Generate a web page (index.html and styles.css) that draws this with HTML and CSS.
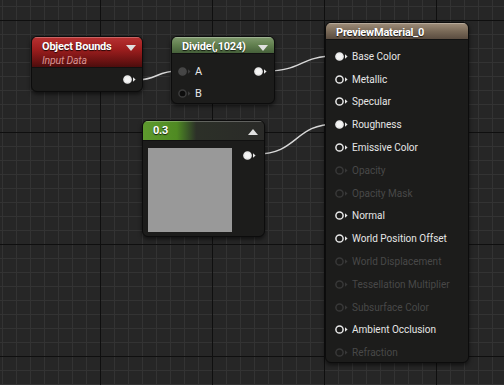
FILE: index.html
```html
<!DOCTYPE html>
<html lang="en">
<head>
    <meta charset="UTF-8">
    <title>Material Graph</title>
    <link rel="stylesheet" href="styles.css">
</head>
<body>
    <div class="graph">
        <!-- wires sit behind the nodes -->
        <svg class="wires" width="504" height="385" viewBox="0 0 504 385">
            <path d="M136 80 C158 80 156 71 178 71"/>
            <path d="M267 71 C302 71 300 56 336 56"/>
            <path d="M257 154 C298 154 294 124 336 124"/>
        </svg>

        <div class="node node-bounds">
            <div class="node-head head-red">
                <div class="head-text">
                    <div class="title">Object Bounds</div>
                    <div class="subtitle">Input Data</div>
                </div>
                <span class="caret down"></span>
            </div>
            <div class="node-body end">
                <div class="pin-row out"><svg class="pin on" viewBox="0 0 13 9"><circle cx="4.5" cy="4.5" r="3.6"/><path d="M10 2.3 L12.6 4.5 L10 6.7 Z"/></svg></div>
            </div>
        </div>

        <div class="node node-divide">
            <div class="node-head head-sage">
                <div class="title">Divide(,1024)</div>
                <span class="caret down"></span>
            </div>
            <div class="node-body split">
                <div class="pin-col">
                    <div class="pin-row"><svg class="pin dim-fill" viewBox="0 0 13 9"><circle cx="4.5" cy="4.5" r="3.6"/><path d="M10 2.3 L12.6 4.5 L10 6.7 Z"/></svg><span>A</span></div>
                    <div class="pin-row"><svg class="pin dim" viewBox="0 0 13 9"><circle cx="4.5" cy="4.5" r="3.6"/><path d="M10 2.3 L12.6 4.5 L10 6.7 Z"/></svg><span>B</span></div>
                </div>
                <div class="pin-col">
                    <div class="pin-row"><svg class="pin on" viewBox="0 0 13 9"><circle cx="4.5" cy="4.5" r="3.6"/><path d="M10 2.3 L12.6 4.5 L10 6.7 Z"/></svg></div>
                </div>
            </div>
        </div>

        <div class="node node-const">
            <div class="node-head head-green">
                <div class="title">0.3</div>
                <span class="caret up"></span>
            </div>
            <div class="node-body preview">
                <div class="swatch"></div>
                <div class="pin-row"><svg class="pin on" viewBox="0 0 13 9"><circle cx="4.5" cy="4.5" r="3.6"/><path d="M10 2.3 L12.6 4.5 L10 6.7 Z"/></svg></div>
            </div>
        </div>

        <div class="node node-material">
            <div class="node-head head-brown">
                <div class="title">PreviewMaterial_0</div>
            </div>
            <div class="node-body inputs" id="inputs"></div>
        </div>
    </div>

    <script>
        // material inputs: [label, connected, enabled]
        const inputs = [
            ['Base Color', true, true],
            ['Metallic', false, true],
            ['Specular', false, true],
            ['Roughness', true, true],
            ['Emissive Color', false, true],
            ['Opacity', false, false],
            ['Opacity Mask', false, false],
            ['Normal', false, true],
            ['World Position Offset', false, true],
            ['World Displacement', false, false],
            ['Tessellation Multiplier', false, false],
            ['Subsurface Color', false, false],
            ['Ambient Occlusion', false, true],
            ['Refraction', false, false]
        ];

        const list = document.getElementById('inputs');
        inputs.forEach(function(item) {
            const row = document.createElement('div');
            let cls = 'pin';
            if (item[1]) cls += ' on';
            if (!item[2]) cls += ' off';
            row.className = 'pin-row' + (item[2] ? '' : ' disabled');
            row.innerHTML = '<svg class="' + cls + '" viewBox="0 0 13 9"><circle cx="4.5" cy="4.5" r="3.6"/><path d="M10 2.3 L12.6 4.5 L10 6.7 Z"/></svg><span>' + item[0] + '</span>';
            list.appendChild(row);
        });
    </script>
</body>
</html>
```

FILE: styles.css
```css
body {
    margin: 0;
    background: #262626;
    font-family: Roboto, "Liberation Sans", sans-serif;
    overflow: hidden;
}
.graph {
    position: relative;
    width: 504px;
    height: 385px;
    overflow: hidden;
    background-color: #262626;
    background-image:
        linear-gradient(90deg, #0f0f0f 1px, transparent 1px),
        linear-gradient(#0f0f0f 1px, transparent 1px),
        linear-gradient(90deg, #333 1px, transparent 1px),
        linear-gradient(#333 1px, transparent 1px);
    background-size: 112px 112px, 112px 112px, 14px 14px, 14px 14px;
    background-position: 100px 0, 0 20px, 2px 0, 0 6px;
}
.wires {
    position: absolute;
    left: 0;
    top: 0;
}
.wires path {
    fill: none;
    stroke: #d8d8d8;
    stroke-width: 1.4;
}
.node {
    position: absolute;
    display: flex;
    flex-direction: column;
    background: #1c1c1b;
    border: 1px solid #0c0c0c;
    border-radius: 6px;
    box-shadow: 0 2px 4px rgba(0,0,0,0.6);
    overflow: hidden;
    color: #e6e6e6;
    font-size: 10px;
}
.node-head {
    display: flex;
    align-items: flex-start;
    justify-content: space-between;
    padding: 3px 6px 0 10px;
    border-bottom: 1px solid #111;
    box-shadow: inset 0 1px 0 rgba(255,255,255,0.25);
}
.title {
    font-weight: bold;
    font-size: 11px;
    letter-spacing: -0.2px;
    color: #fff;
    text-shadow: 0 1px 1px rgba(0,0,0,0.8);
}
.subtitle {
    font-style: italic;
    font-size: 10.5px;
    color: #d99494;
    letter-spacing: -0.2px;
    margin-top: 1px;
}
.caret {
    width: 0;
    height: 0;
    margin-top: 5px;
    border-left: 5px solid transparent;
    border-right: 5px solid transparent;
}
.caret.down {
    border-top: 6px solid #e0e0e0;
}
.caret.up {
    border-bottom: 6px solid #e0e0e0;
}
.head-red {
    height: 27px;
    background: linear-gradient(180deg, #b83232 0%, #9e1e1e 40%, #6a1212 80%, #4c0d0d 100%);
}
.head-sage {
    height: 14px;
    background: linear-gradient(180deg, #809a6e 0%, #62804f 50%, #46603a 100%);
}
.head-green {
    height: 16px;
    background: linear-gradient(90deg, #5e9a2e 0%, #4f8a22 28%, #3c5e26 36%, #2c3028 44%, #2a2a28 100%);
}
.head-brown {
    height: 14px;
    background: linear-gradient(180deg, #a08f7b 0%, #7a6a58 50%, #5a4c40 100%);
}
.node-body {
    flex: 1;
    display: flex;
}
.node-body.end {
    justify-content: flex-end;
    align-items: center;
    padding: 0 6px 0 0;
}
.pin-row {
    display: flex;
    align-items: center;
    gap: 4px;
    height: 22px;
}
.pin {
    width: 13px;
    height: 9px;
    overflow: visible;
}
.pin circle {
    fill: none;
    stroke: #e8e8e8;
    stroke-width: 1.5;
}
.pin path {
    fill: #e8e8e8;
}
.pin.on circle {
    fill: #f4f4f4;
}
.pin.dim circle {
    stroke: #3c3c3c;
    fill: #0c0c0c;
}
.pin.dim path,
.pin.dim-fill path {
    fill: #3c3c3c;
}
.pin.dim-fill circle {
    stroke: #464646;
    fill: #464646;
}
.pin.off circle {
    stroke: #383838;
}
.pin.off path {
    fill: #383838;
}
.node-body.split {
    justify-content: space-between;
    padding: 6px 7px 0 6px;
    font-size: 11px;
}
.node-body.preview {
    padding: 7px 7px 0 5px;
    gap: 11px;
    align-items: flex-start;
}
.swatch {
    width: 84px;
    height: 84px;
    background: #999;
}
.node-body.preview .pin-row {
    margin-top: -4px;
}
.node-body.inputs {
    flex-direction: column;
    padding: 5px 0 0 9px;
}
.node-body.inputs .pin-row {
    height: 22.8px;
    gap: 4px;
}
.disabled span {
    color: #484848;
}
.node-bounds {
    left: 31px;
    top: 36px;
    width: 110px;
    height: 54px;
}
.node-divide {
    left: 171px;
    top: 36px;
    width: 102px;
    height: 66px;
}
.node-const {
    left: 142px;
    top: 120px;
    width: 121px;
    height: 115px;
}
.node-material {
    left: 325px;
    top: 22px;
    width: 142px;
    height: 339px;
}
```
